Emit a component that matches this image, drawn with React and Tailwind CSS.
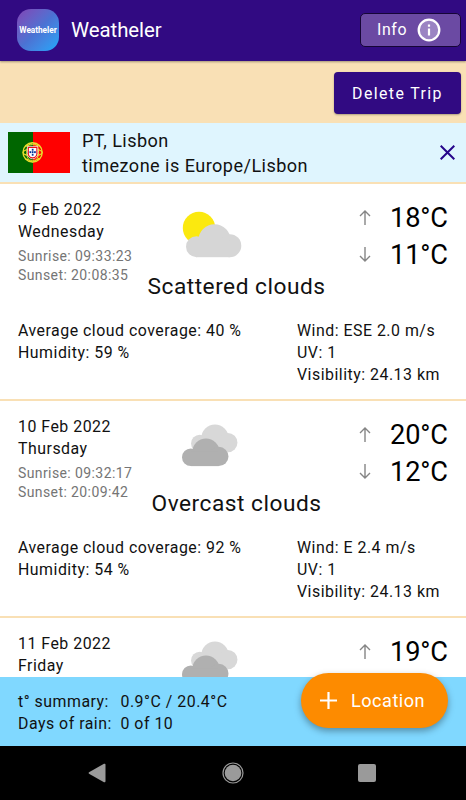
import React from "react";

const PARTLY = "partly";
const OVERCAST = "overcast";

const days = [
  { date: "9 Feb 2022", day: "Wednesday", sunrise: "09:33:23", sunset: "20:08:35", hi: "18°C", lo: "11°C", label: "Scattered clouds", cover: "40 %", hum: "59 %", wind: "ESE 2.0 m/s", icon: PARTLY },
  { date: "10 Feb 2022", day: "Thursday", sunrise: "09:32:17", sunset: "20:09:42", hi: "20°C", lo: "12°C", label: "Overcast clouds", cover: "92 %", hum: "54 %", wind: "E 2.4 m/s", icon: OVERCAST },
  { date: "11 Feb 2022", day: "Friday", hi: "19°C", icon: OVERCAST },
];

function Cloud({ fill, transform }) {
  return (
    <g fill={fill} transform={transform}>
      <circle cx="10.5" cy="22.5" r="10.5" />
      <circle cx="28.5" cy="16.2" r="16.2" />
      <circle cx="43.8" cy="21.5" r="11.5" />
      <rect x="10.5" y="16" width="33.3" height="17" />
    </g>
  );
}

function WeatherIcon({ kind }) {
  return (
    <svg className="h-[60px] w-[72px]" viewBox="0 0 72 60">
      {kind === PARTLY ? (
        <>
          <circle cx="23" cy="22" r="16.2" fill="#fbe90f" />
          <Cloud fill="#d6d6d6" transform="translate(10 18.2)" />
        </>
      ) : (
        <>
          <Cloud fill="#d8d8d8" transform="translate(15 1.6) scale(.84)" />
          <Cloud fill="#b0b0b0" transform="translate(6 15.4) scale(.84)" />
        </>
      )}
    </svg>
  );
}

function Arrow({ down }) {
  return (
    <svg className="-mt-px h-4 w-3" viewBox="0 0 12 16" fill="none" stroke="#858585" strokeWidth="1.4">
      <path d={down ? "M6 0V14M1 9l5 5 5-5" : "M6 15V1M1 6l5-5 5 5"} />
    </svg>
  );
}

function Temp({ value, down }) {
  return (
    <div className="flex items-center justify-end gap-[19px]">
      <Arrow down={down} />
      <span className="w-[58px] whitespace-nowrap">{value}</span>
    </div>
  );
}

function Flag() {
  return (
    <svg className="h-[41px] w-[62px]" viewBox="0 0 62 41">
      <rect width="62" height="41" fill="#f00" />
      <rect width="25" height="41" fill="#060" />
      <g fill="none" stroke="#e8dc2c">
        <circle cx="24.6" cy="20.4" r="9.6" strokeWidth="1.4" />
        <ellipse cx="24.6" cy="20.4" rx="9.5" ry="3.5" strokeWidth="1.1" />
        <ellipse cx="24.6" cy="20.4" rx="6" ry="9.5" strokeWidth="1" />
        <path d="M17 14.5q7.6-4 15.2 0M17 26.5q7.6 4 15.2 0M18 13.5l13 13.5" />
      </g>
      <path d="M19.4 14.4h10.4v7.2a5.2 5.2 0 0 1-10.4 0z" fill="#e8101a" stroke="#fff" strokeWidth=".7" />
      <path d="M20.9 16h7.4v5.5a3.7 3.7 0 0 1-7.4 0z" fill="#fff" />
      <g fill="#003399">
        <rect x="23.8" y="16.8" width="1.7" height="1.9" />
        <rect x="21.5" y="19.2" width="1.7" height="1.9" />
        <rect x="23.8" y="19.2" width="1.7" height="1.9" />
        <rect x="26.1" y="19.2" width="1.7" height="1.9" />
        <rect x="23.8" y="21.8" width="1.7" height="1.9" />
      </g>
    </svg>
  );
}

function DayCard({ d }) {
  return (
    <section className="h-[217.4px] shrink-0 border-b-2 border-[#f9e0b5] bg-white pl-[18px] pr-[18px] pt-[15px]">
      <div className="flex h-[89px]">
        <div className="w-[158px] leading-[22px]">
          <p>{d.date}</p>
          <p>{d.day}</p>
          {d.sunrise && (
            <div className="mt-[4.5px] text-[14px] leading-[18.5px] tracking-[0.4px] text-[#757575]">
              <p>Sunrise: {d.sunrise}</p>
              <p>Sunset: {d.sunset}</p>
            </div>
          )}
        </div>
        <div className="mt-[7px] flex-1"><WeatherIcon kind={d.icon} /></div>
        <div className="mt-px flex flex-col text-[27.2px] leading-[37px] tracking-[-0.15px] text-black">
          <Temp value={d.hi} />
          {d.lo && <Temp value={d.lo} down />}
        </div>
      </div>
      {d.label && (
        <>
          <h2 className="-mt-[17px] pl-[7px] text-center text-[22.7px] leading-[32px] tracking-[0.5px]">{d.label}</h2>
          <div className="mt-[17px] flex leading-[22px]">
            <div className="w-[279px]">
              <p>Average cloud coverage: {d.cover}</p>
              <p>Humidity: {d.hum}</p>
            </div>
            <div className="whitespace-nowrap">
              <p>Wind: {d.wind}</p>
              <p>UV: 1</p>
              <p>Visibility: 24.13 km</p>
            </div>
          </div>
        </>
      )}
    </section>
  );
}

export default function App() {
  return (
    <div className="flex h-[800px] w-[466px] flex-col overflow-hidden bg-white font-['Roboto',sans-serif] text-[15.9px] tracking-[0.5px] text-[#111]">
      <header className="z-10 flex h-[61px] shrink-0 items-center bg-[#310a82] pl-[17px] pr-[5px] text-white shadow-[0_1px_2px_rgba(0,0,0,0.35)]">
        <div className="mb-px flex size-[42px] items-center justify-center rounded-[14px] bg-linear-to-br from-[#7e43b5] via-[#4b72d3] to-[#12a8fb] text-[8.3px] font-bold tracking-[-0.05px]">Weatheler</div>
        <h1 className="ml-[12px] flex-1 text-[20.4px] tracking-[-0.05px]">Weatheler</h1>
        <button className="mb-[2px] flex h-[34px] w-[101px] items-center rounded-[5px] border border-[#160537] bg-[#6b4aa3] pl-[16px] tracking-[0.6px]">
          Info
          <svg className="ml-[10px] size-6" viewBox="0 0 24 24"><circle cx="12" cy="12" r="10.3" fill="#9b84c3" stroke="#fff" strokeWidth="2.3" /><path d="M12 10.5v7M12 6.5v2.3" stroke="#fff" strokeWidth="2.2" /></svg>
        </button>
      </header>
      <div className="flex h-[62px] shrink-0 items-center justify-end bg-[#f9e0b5] pr-[5px] pt-[2px]">
        <button className="h-[42px] w-[127px] rounded-[4px] bg-[#310a82] pt-px tracking-[1.4px] text-white shadow-[0_1px_2px_rgba(0,0,0,0.3)]">Delete Trip</button>
      </div>
      <div className="flex h-[60.5px] shrink-0 items-center border-b-2 border-[#f9e0b5] bg-[#dff5fe] pl-[8px] pr-[11px]">
        <Flag />
        <div className="ml-[12px] flex-1 pt-px text-[18.1px] leading-[25px] tracking-[0.45px]"><p>PT, Lisbon</p><p>timezone is Europe/Lisbon</p></div>
        <svg className="size-[15px]" viewBox="0 0 15 15" stroke="#26058b" strokeWidth="2"><path d="M.7.7l13.6 13.6M14.3.7L.7 14.3" /></svg>
      </div>
      <main className="flex h-[493.5px] shrink-0 flex-col overflow-hidden">
        {days.map((d) => <DayCard key={d.date} d={d} />)}
      </main>
      <footer className="relative flex h-[69px] shrink-0 bg-[#80d8ff] pl-[18px] pt-[14px] leading-[22px]">
        <div className="w-[102.5px] whitespace-nowrap"><p>t° summary:</p><p>Days of rain:</p></div>
        <div><p>0.9°C / 20.4°C</p><p>0 of 10</p></div>
        <button className="absolute -top-[4.5px] right-[18px] flex h-[55px] w-[147px] items-center rounded-full bg-[#fd8b00] pl-[19px] pt-px text-[18.1px] text-white shadow-[0_3px_7px_rgba(0,0,0,0.35)]">
          <svg className="mb-px mr-[14px] size-[17px]" viewBox="0 0 17 17" stroke="#fff" strokeWidth="2.2"><path d="M8.5 0v17M0 8.5h17" /></svg>
          Location
        </button>
      </footer>
      <nav className="flex h-[54px] shrink-0 items-center justify-between bg-black pl-[88px] pr-[90px]">
        <svg className="h-5 w-[18px]" viewBox="0 0 18 20" fill="#9a9a9a"><path d="M1 9.3 16 .8q1.5-.5 1.5 1v16.4q0 1.5-1.5 1L1 10.7q-1-.7 0-1.4z" /></svg>
        <svg className="ml-[2px] size-[22px]" viewBox="0 0 22 22"><circle cx="11" cy="11" r="8.3" fill="#9a9a9a" /><circle cx="11" cy="11" r="10" fill="none" stroke="#9a9a9a" strokeWidth="1.2" /></svg>
        <div className="size-[18px] rounded-[2px] bg-[#9a9a9a]" />
      </nav>
    </div>
  );
}
